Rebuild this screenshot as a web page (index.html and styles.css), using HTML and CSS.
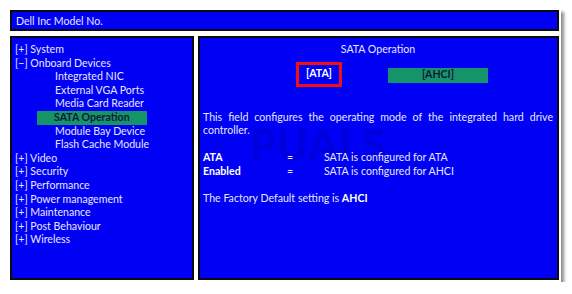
FILE: index.html
```html
<!DOCTYPE html>
<html>
<head>
<meta charset="utf-8">
<link rel="stylesheet" href="styles.css">
</head>
<body>
<div class="frame">
  <div class="titlebar">Dell Inc Model No.</div>
  <div class="panels">
    <div class="panel left">
      <div class="item">[+] System</div>
      <div class="item">[−] Onboard Devices</div>
      <div class="item sub">Integrated NIC</div>
      <div class="item sub">External VGA Ports</div>
      <div class="item sub">Media Card Reader</div>
      <div class="item sub selected">SATA Operation</div>
      <div class="item sub">Module Bay Device</div>
      <div class="item sub">Flash Cache Module</div>
      <div class="item">[+] Video</div>
      <div class="item">[+] Security</div>
      <div class="item">[+] Performance</div>
      <div class="item">[+] Power management</div>
      <div class="item">[+] Maintenance</div>
      <div class="item">[+] Post Behaviour</div>
      <div class="item">[+] Wireless</div>
    </div>
    <div class="panel right">
      <div class="heading">SATA Operation</div>
      <div class="options">
        <div class="opt ata">[ATA]</div>
        <div class="opt ahci">[AHCI]</div>
      </div>
      <p class="desc">This field configures the operating mode of the integrated hard drive controller.</p>
      <div class="defs">
        <span class="term">ATA</span><span class="eq">=</span><span>SATA is configured for ATA</span>
        <span class="term">Enabled</span><span class="eq">=</span><span>SATA is configured for AHCI</span>
      </div>
      <p class="default">The Factory Default setting is <b>AHCI</b></p>
    </div>
  </div>
</div>
</body>
</html>
```

FILE: styles.css
```css
html, body {
  margin: 0;
  padding: 0;
  background: #ffffff;
}
body {
  font-family: "Lato", "Liberation Sans", sans-serif;
  font-size: 10.6px;
  color: #e6e8ff;
}
.frame {
  margin: 8px 0 0 8px;
  width: 549px;
  padding: 2px;
  background: #ffffff;
  box-shadow: 3px 4px 3px rgba(0, 0, 0, 0.45);
}
.titlebar {
  box-sizing: border-box;
  height: 21px;
  background: #0000f5;
  border: 2px solid #0a0a14;
  padding: 1px 4px 0 4px;
  line-height: 16px;
}
.panels {
  display: flex;
  gap: 4px;
  margin-top: 5px;
  height: 244px;
}
.panel {
  box-sizing: border-box;
  background: #0000f5;
  border: 2px solid #0a0a14;
  padding-top: 5px;
  line-height: 13.6px;
}
.left {
  width: 184px;
  padding-left: 3px;
}
.item {
  height: 13.6px;
  white-space: nowrap;
}
.sub {
  padding-left: 40px;
}
.sub.selected {
  margin-left: 22px;
  padding-left: 17px;
  width: 110px;
  box-sizing: border-box;
  background: #15946a;
  color: #10183a;
  font-weight: bold;
}
.right {
  flex: 1;
  position: relative;
  padding-left: 3px;
  padding-right: 4px;
}
.right::before {
  content: "PUALS";
  position: absolute;
  left: 50px;
  top: 84px;
  font-size: 42px;
  font-weight: 900;
  line-height: 44px;
  letter-spacing: 1px;
  color: rgba(0, 0, 60, 0.15);
  pointer-events: none;
}
.right > * {
  position: relative;
}
.heading {
  text-align: center;
}
.options {
  display: flex;
  align-items: center;
  gap: 46px;
  height: 25px;
  margin-top: 5px;
  padding-left: 93px;
}
.opt {
  box-sizing: border-box;
  display: flex;
  align-items: center;
  justify-content: center;
  font-weight: bold;
}
.ata {
  width: 46px;
  height: 25px;
  border: 3px solid #f01010;
  color: #ffffff;
}
.ahci {
  width: 100px;
  height: 15px;
  margin-top: 2px;
  background: #15946a;
  color: #10183a;
}
.desc {
  margin: 24px 0 0 0;
  text-align: justify;
}
.defs {
  display: grid;
  grid-template-columns: 84px 37px auto;
  margin-top: 13.6px;
}
.term {
  font-weight: bold;
  color: #ffffff;
}
.default {
  margin: 13.6px 0 0 0;
}
.default b {
  color: #ffffff;
}
```
